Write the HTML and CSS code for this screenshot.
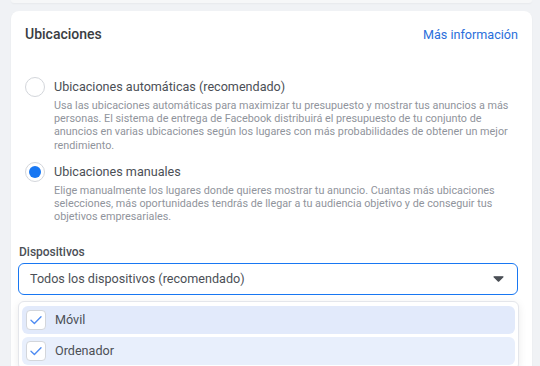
FILE: index.html
```html
<!DOCTYPE html>
<html lang="es">
<head>
<meta charset="utf-8">
<title>Ubicaciones</title>
<link rel="stylesheet" href="styles.css">
</head>
<body>
<div class="page">
  <div class="prev-card"></div>
  <section class="card">
    <header class="card-header">
      <h2 class="card-title">Ubicaciones</h2>
      <a class="more-link" href="#">Más información</a>
    </header>

    <div class="options">
      <div class="option">
        <span class="radio"></span>
        <div class="option-text">
          <div class="option-label">Ubicaciones automáticas (recomendado)</div>
          <p class="option-desc">Usa las ubicaciones automáticas para maximizar tu presupuesto y mostrar tus anuncios a más personas. El sistema de entrega de Facebook distribuirá el presupuesto de tu conjunto de anuncios en varias ubicaciones según los lugares con más probabilidades de obtener un mejor rendimiento.</p>
        </div>
      </div>
      <div class="option">
        <span class="radio radio-checked"><span class="radio-dot"></span></span>
        <div class="option-text">
          <div class="option-label">Ubicaciones manuales</div>
          <p class="option-desc">Elige manualmente los lugares donde quieres mostrar tu anuncio. Cuantas más ubicaciones selecciones, más oportunidades tendrás de llegar a tu audiencia objetivo y de conseguir tus objetivos empresariales.</p>
        </div>
      </div>
    </div>

    <div class="devices">
      <div class="devices-label">Dispositivos</div>
      <div class="select">
        <span class="select-value">Todos los dispositivos (recomendado)</span>
        <svg class="caret" width="11" height="6" viewBox="0 0 11 6"><path d="M1 0.8 H10 L5.5 5.2 Z" fill="#4b4f56" stroke="#4b4f56" stroke-width="1.2" stroke-linejoin="round"/></svg>
      </div>
      <div class="menu">
        <div class="menu-item menu-item-hover">
          <span class="checkbox"><svg width="20" height="20" viewBox="0 0 20 20"><path d="M5 10.2 L8.4 13.4 L15 6.8" fill="none" stroke="#4f8cf2" stroke-width="1.4" stroke-linecap="round" stroke-linejoin="round"/></svg></span>
          <span class="menu-text">Móvil</span>
        </div>
        <div class="menu-item">
          <span class="checkbox"><svg width="20" height="20" viewBox="0 0 20 20"><path d="M5 10.2 L8.4 13.4 L15 6.8" fill="none" stroke="#4f8cf2" stroke-width="1.4" stroke-linecap="round" stroke-linejoin="round"/></svg></span>
          <span class="menu-text">Ordenador</span>
        </div>
      </div>
    </div>
  </section>
</div>
</body>
</html>
```

FILE: styles.css
```css
* { box-sizing: border-box; }
html, body { margin: 0; padding: 0; }
body {
  background: #f0f2f5;
  font-family: Roboto, "Liberation Sans", sans-serif;
  color: #1c1e21;
  width: 540px;
  height: 366px;
  overflow: hidden;
}
.page {
  display: flex;
  flex-direction: column;
  padding: 0 8px 0 11px;
}
.prev-card {
  height: 3px;
  background: #f6f7f8;
  border-radius: 0 0 8px 8px;
  box-shadow: 0 1px 2px rgba(0,0,0,0.04);
}
.card {
  margin-top: 8px;
  background: #fff;
  border-radius: 8px;
  box-shadow: 0 1px 2px rgba(0,0,0,0.06);
  padding: 14px 14px 80px 7px;
}
.card-header {
  display: flex;
  justify-content: space-between;
  align-items: baseline;
  padding-left: 7px;
  line-height: 18px;
}
.card-title {
  margin: 0;
  font-size: 14px;
  font-weight: 500;
  color: #3a3d42;
}
.more-link {
  font-size: 12.6px;
  color: #2a6fdb;
  text-decoration: none;
}
.options {
  padding-left: 7px;
  margin-top: 33px;
  display: flex;
  flex-direction: column;
  gap: 10px;
}
.option {
  display: flex;
  align-items: flex-start;
  gap: 9px;
}
.radio {
  flex: none;
  width: 20px;
  height: 20px;
  border-radius: 50%;
  border: 1px solid #d3d6db;
  background: #fff;
  display: flex;
  align-items: center;
  justify-content: center;
}
.radio-dot {
  width: 12px;
  height: 12px;
  border-radius: 50%;
  background: #1877f2;
}
.option-text { flex: 1; }
.option-label {
  font-size: 12.6px;
  line-height: 20px;
  color: #4b4f56;
}
.option-desc {
  margin: 1.5px 0 0;
  font-size: 10.8px;
  line-height: 13.4px;
  color: #90949c;
}
.devices {
  position: relative;
  margin-top: 20px;
}
.devices-label {
  padding-left: 1px;
  font-size: 12px;
  font-weight: 500;
  line-height: 16px;
  color: #4b4f56;
}
.select {
  margin-top: 3px;
  height: 32px;
  border: 1px solid #1877f2;
  border-radius: 6px;
  display: flex;
  align-items: center;
  justify-content: space-between;
  padding: 0 13px 0 11px;
  background: #fff;
}
.select-value {
  font-size: 12.6px;
  color: #4b4f56;
}
.caret { display: block; margin-top: 1px; }
.menu {
  position: absolute;
  left: 0;
  right: -1px;
  top: 57px;
  background: #fff;
  border: 1px solid #e4e6eb;
  border-radius: 6px;
  box-shadow: 0 2px 8px rgba(0,0,0,0.08);
  padding: 4px 3px;
  display: flex;
  flex-direction: column;
  gap: 3px;
}
.menu-item {
  height: 28px;
  border-radius: 6px;
  background: #e8effc;
  display: flex;
  align-items: center;
  gap: 9px;
  padding-left: 4px;
}
.menu-item-hover { background: #e2eafb; }
.checkbox {
  flex: none;
  width: 20px;
  height: 20px;
  border: 1px solid #d3d6db;
  border-radius: 4px;
  background: #fff;
  display: flex;
  align-items: center;
  justify-content: center;
  overflow: hidden;
}
.checkbox svg { display: block; flex: none; }
.menu-text {
  font-size: 12.6px;
  color: #4b4f56;
}
```
